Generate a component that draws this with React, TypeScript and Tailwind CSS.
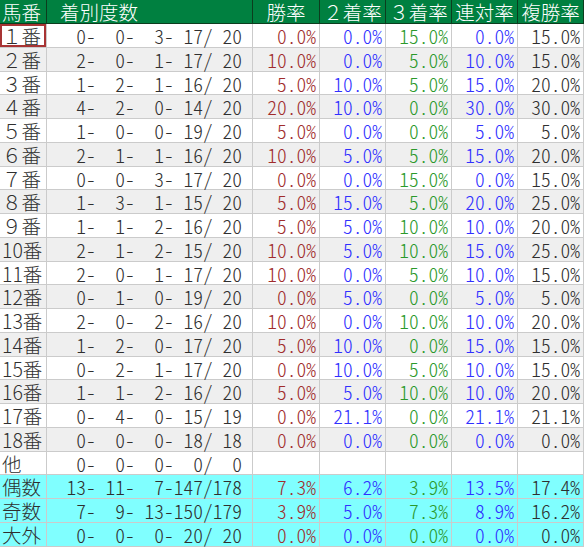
import React from 'react';

type Row = {
  label: string;
  counts: number[];
  rates: string[];
  bg: string;
  selected?: boolean;
};

const pad = (n: number) => String(n).padStart(3, ' ');
const countText = (c: number[]) => `${pad(c[0])}-${pad(c[1])}-${pad(c[2])}-${pad(c[3])}/${pad(c[4])}`;

const WHITE = 'bg-white';
const GRAY = 'bg-[#efefef]';
const CYAN = 'bg-[#80ffff]';

const raw: [string, number[], string[]][] = [
  ['１番', [0, 0, 3, 17, 20], ['0.0%', '0.0%', '15.0%', '0.0%', '15.0%']],
  ['２番', [2, 0, 1, 17, 20], ['10.0%', '0.0%', '5.0%', '10.0%', '15.0%']],
  ['３番', [1, 2, 1, 16, 20], ['5.0%', '10.0%', '5.0%', '15.0%', '20.0%']],
  ['４番', [4, 2, 0, 14, 20], ['20.0%', '10.0%', '0.0%', '30.0%', '30.0%']],
  ['５番', [1, 0, 0, 19, 20], ['5.0%', '0.0%', '0.0%', '5.0%', '5.0%']],
  ['６番', [2, 1, 1, 16, 20], ['10.0%', '5.0%', '5.0%', '15.0%', '20.0%']],
  ['７番', [0, 0, 3, 17, 20], ['0.0%', '0.0%', '15.0%', '0.0%', '15.0%']],
  ['８番', [1, 3, 1, 15, 20], ['5.0%', '15.0%', '5.0%', '20.0%', '25.0%']],
  ['９番', [1, 1, 2, 16, 20], ['5.0%', '5.0%', '10.0%', '10.0%', '20.0%']],
  ['10番', [2, 1, 2, 15, 20], ['10.0%', '5.0%', '10.0%', '15.0%', '25.0%']],
  ['11番', [2, 0, 1, 17, 20], ['10.0%', '0.0%', '5.0%', '10.0%', '15.0%']],
  ['12番', [0, 1, 0, 19, 20], ['0.0%', '5.0%', '0.0%', '5.0%', '5.0%']],
  ['13番', [2, 0, 2, 16, 20], ['10.0%', '0.0%', '10.0%', '10.0%', '20.0%']],
  ['14番', [1, 2, 0, 17, 20], ['5.0%', '10.0%', '0.0%', '15.0%', '15.0%']],
  ['15番', [0, 2, 1, 17, 20], ['0.0%', '10.0%', '5.0%', '10.0%', '15.0%']],
  ['16番', [1, 1, 2, 16, 20], ['5.0%', '5.0%', '10.0%', '10.0%', '20.0%']],
  ['17番', [0, 4, 0, 15, 19], ['0.0%', '21.1%', '0.0%', '21.1%', '21.1%']],
  ['18番', [0, 0, 0, 18, 18], ['0.0%', '0.0%', '0.0%', '0.0%', '0.0%']],
  ['他', [0, 0, 0, 0, 0], ['', '', '', '', '']],
];

const rows: Row[] = [
  ...raw.map(([label, counts, rates], i) => ({
    label,
    counts,
    rates,
    bg: i % 2 === 0 ? WHITE : GRAY,
    selected: i === 0,
  })),
  { label: '偶数', counts: [13, 11, 7, 147, 178], rates: ['7.3%', '6.2%', '3.9%', '13.5%', '17.4%'], bg: CYAN },
  { label: '奇数', counts: [7, 9, 13, 150, 179], rates: ['3.9%', '5.0%', '7.3%', '8.9%', '16.2%'], bg: CYAN },
  { label: '大外', counts: [0, 0, 0, 20, 20], rates: ['0.0%', '0.0%', '0.0%', '0.0%', '0.0%'], bg: CYAN },
];

const rateColors = ['text-[#a02c2c]', 'text-[#3030ff]', 'text-[#2b992b]', 'text-[#3030ff]', 'text-[#2f2f2f]'];
const headers = ['勝率', '２着率', '３着率', '連対率', '複勝率'];

const cols = 'grid grid-cols-[47px_206px_67px_66px_66px_66px_66px]';
const cell = 'border-r border-b border-[#cbcbcb] h-[23.75px] leading-[24px] whitespace-pre';
const half = "[font-feature-settings:'hwid']";
const head = 'h-[24px] leading-[23px] bg-[#008040] text-white border-r border-b border-[#0c3d1e] whitespace-pre';

export default function App() {
  return (
    <div className="w-[587px] h-[550px] bg-white text-[19.5px] font-light text-[#2f2f2f] font-['Noto_Sans_CJK_JP',sans-serif]">
      <div className={`${cols} w-[584px]`}>
        <div className={`${head} pl-[2px]`}>馬番</div>
        <div className={`${head} pl-[13px]`}>着別度数</div>
        {headers.map((h) => (
          <div key={h} className={`${head} text-center`}>
            {h}
          </div>
        ))}
        {rows.map((r) => (
          <React.Fragment key={r.label}>
            <div className={`${cell} ${r.bg} ${half} pl-[2px] relative`}>
              {r.selected && <div className="absolute inset-0 border-2 border-[#a83434]" />}
              <span className="[font-feature-settings:normal]">{r.label}</span>
            </div>
            <div className={`${cell} ${r.bg} ${half} text-center`}>{countText(r.counts)}</div>
            {r.rates.map((v, i) => (
              <div key={i} className={`${cell} ${r.bg} ${half} ${rateColors[i]} text-right pr-[3px]`}>
                {v}
              </div>
            ))}
          </React.Fragment>
        ))}
      </div>
    </div>
  );
}
